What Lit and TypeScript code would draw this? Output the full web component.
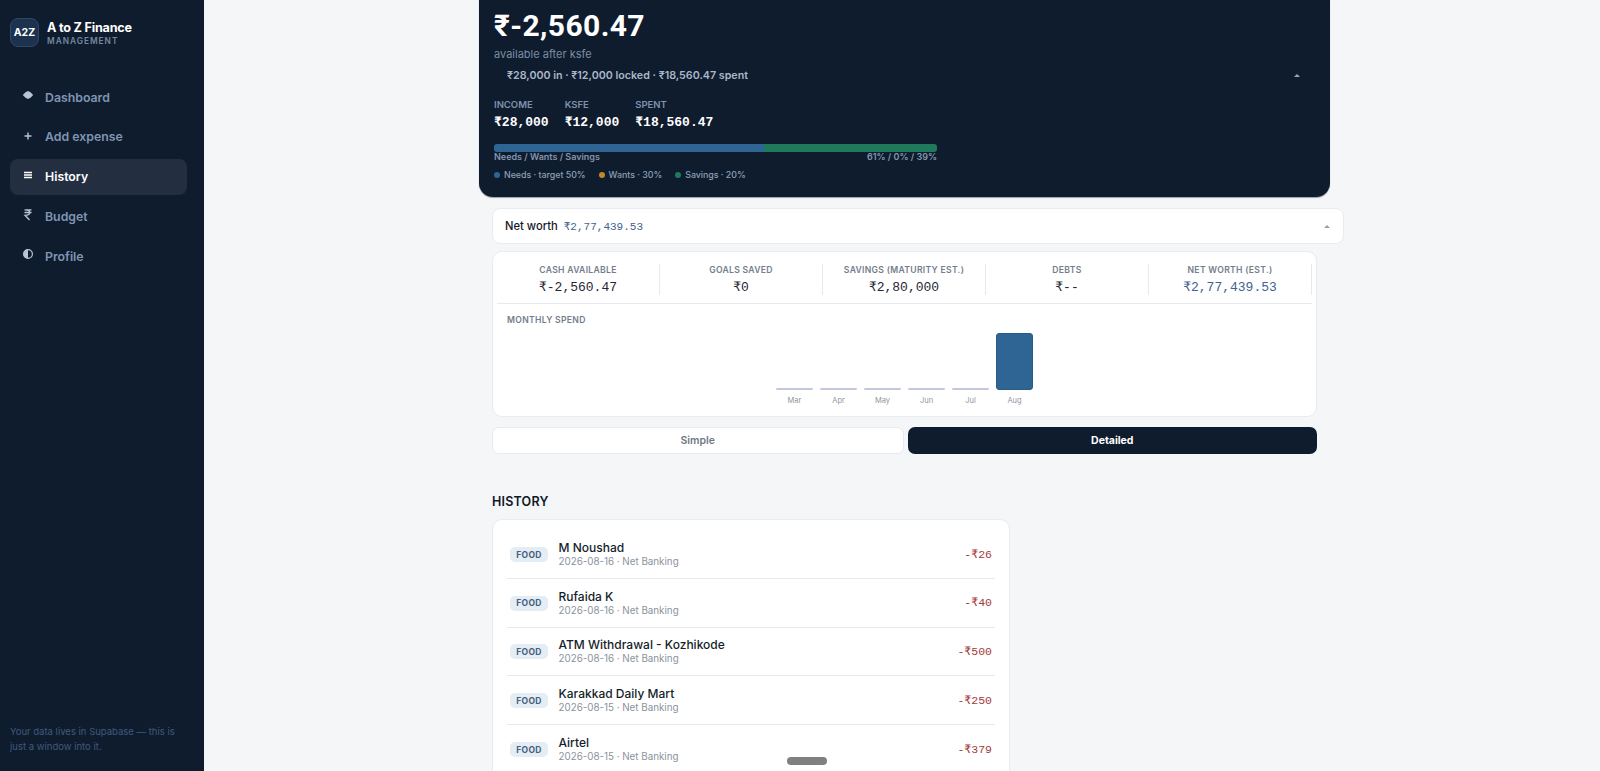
import { LitElement, html, css, svg } from "lit";
import { customElement } from "lit/decorators.js";

const NAV = [
  { label: "Dashboard", icon: svg`<path d="M6 1 8.500 2.200 11.200 5 8.500 7.800 6 9 3.500 7.800 .8 5 3.500 2.200Z" fill="currentColor"/>` , cls: "" },
  { label: "Add expense", icon: svg`<path d="M6 2.500v7M2.500 6h7" stroke="currentColor" stroke-width="1.400" fill="none"/>`, cls: "" },
  { label: "History", icon: svg`<path d="M2 2.500h8M2 5h8M2 7.500h8" stroke="currentColor" stroke-width="1.600" fill="none"/>`, cls: "active" },
  { label: "Budget", icon: svg`<path d="M2.500 .8h7M2.500 3.500h7M3 .8c3.800 0 4.800 1.200 4.800 2.700S6.300 6.300 3 6.300L7.500 11" stroke="currentColor" stroke-width="1.300" fill="none"/>`, cls: "" },
  { label: "Profile", icon: svg`<circle cx="6" cy="5" r="4.400" stroke="currentColor" fill="none" stroke-width="1.200"/><path d="M6 .6a4.400 4.400 0 0 0 0 8.800Z" fill="currentColor"/>`, cls: "" },
];

const STATS = [
  ["CASH AVAILABLE", "₹-2,560.47", ""],
  ["GOALS SAVED", "₹0", ""],
  ["SAVINGS (MATURITY EST.)", "₹2,80,000", ""],
  ["DEBTS", "₹--", ""],
  ["NET WORTH (EST.)", "₹2,77,439.53", "blue"],
];

const MONTHS = [
  ["Mar", 2], ["Apr", 2], ["May", 2], ["Jun", 2], ["Jul", 2], ["Aug", 57],
] as const;

const ROWS = [
  ["M Noushad", "2026-08-16 · Net Banking", "-₹26"],
  ["Rufaida K", "2026-08-16 · Net Banking", "-₹40"],
  ["ATM Withdrawal - Kozhikode", "2026-08-16 · Net Banking", "-₹500"],
  ["Karakkad Daily Mart", "2026-08-15 · Net Banking", "-₹250"],
  ["Airtel", "2026-08-15 · Net Banking", "-₹379"],
];

@customElement("app-root")
export class AppRoot extends LitElement {
  static styles = css`
    :host {
      display: block;
      position: relative;
      height: 771px;
      overflow: hidden;
      background: #f4f6f8;
      font-family: Inter, "Noto Sans", sans-serif;
      color: #111827;
    }
    .shell { display: flex; height: 771px; }
    .side {
      width: 204px;
      flex: none;
      box-sizing: border-box;
      background: #0f1c2e;
      padding: 18px 10px 17px;
      display: flex;
      flex-direction: column;
    }
    .brand { display: flex; align-items: center; gap: 8px; height: 29px; }
    .logo {
      width: 29px; height: 29px; box-sizing: border-box;
      border-radius: 8px; border: 1px solid #2f4866;
      background: #1c324e;
      display: flex; align-items: center; justify-content: center;
      color: #fff; font-size: 10.500px; font-weight: 700;
    }
    .brand-t { display: flex; flex-direction: column; margin-top: 0; }
    .brand-name { color: #fff; font-size: 12.600px; font-weight: 700; line-height: 17px; letter-spacing: -0.2px; }
    .brand-sub { color: #75889f; font-size: 8.300px; font-weight: 600; letter-spacing: 1px; line-height: 11px; }
    nav { display: flex; flex-direction: column; margin-top: 32px; gap: 3.800px; }
    .item {
      height: 36px; border-radius: 8px;
      display: flex; align-items: center; gap: 11px;
      padding: 0 12px;
      color: #7f95b2; font-size: 12.300px; font-weight: 600;
      width: 177px; box-sizing: border-box;
    }
    .item svg { width: 12px; height: 12px; flex: none; margin-top: -2px; color: #b7c5d6; }
    .item.active { background: #232f40; color: #fff; }
    .item.active svg { color: #fff; }
    .foot { margin-top: auto; color: #3f5a7c; font-size: 9.500px; line-height: 14.500px; width: 170px; }

    main { flex: 1; min-width: 0; padding-left: 288px; }
    .col { width: 825px; display: flex; flex-direction: column; }

    .hero {
      width: 851px; margin-left: -13px; box-sizing: border-box;
      height: 197px; padding: 9px 15px 0;
      background: #0f1c2e; border-radius: 0 0 14px 14px;
      color: #fff;
      box-shadow: 0 1px 1px rgba(0,0,0,.35);
    }
    .big { font-family: Roboto, Inter, sans-serif; font-size: 30px; font-weight: 700; line-height: 34px; letter-spacing: 0.4px; }
    .after { color: #7b8da5; font-size: 11px; line-height: 14px; margin-top: 4px; }
    .sum {
      display: flex; justify-content: space-between; align-items: center;
      padding: 0 15px 0 13px; margin-top: 6px; height: 16px;
      color: #aab7c8; font-size: 10.700px; font-weight: 600;
    }
    .caret { width: 0; height: 0; border: 3px solid transparent; border-top: 0; border-bottom: 3.500px solid #9aa6b5; }
    .kpis { display: flex; gap: 16px; margin-top: 15px; }
    .kpi-l { color: #7f92ac; font-size: 9.500px; font-weight: 600; line-height: 13px; }
    .kpi-v { font-family: "Liberation Mono", monospace; font-size: 13px; font-weight: 700; line-height: 16px; margin-top: 4px; }
    .track { display: flex; width: 443px; height: 8px; border-radius: 3px; overflow: hidden; margin-top: 13px; }
    .track i { display: block; height: 100%; }
    .sp { display: flex; justify-content: space-between; width: 443px; color: #8296ae; font-size: 9px; font-weight: 600; line-height: 11px; margin-top: -1px; }
    .legend { display: flex; gap: 13px; margin-top: 7px; color: #8ea0b6; font-size: 8.800px; font-weight: 500; line-height: 12px; }
    .legend span { display: flex; align-items: center; gap: 4px; }
    .dot { width: 6px; height: 6px; border-radius: 50%; }

    .nw {
      width: 852px; box-sizing: border-box; height: 36px; margin-top: 11px;
      background: #fff; border: 1px solid #e8ebef; border-radius: 8px;
      display: flex; align-items: center; gap: 6px; padding: 0 13px 0 12px;
      font-size: 11.200px; font-weight: 500;
    }
    .nw b { font-family: "Liberation Mono", monospace; font-size: 11px; font-weight: 400; color: #3f6390; flex: 1; }
    .nw .caret { border-bottom-color: #98a0ac; }

    .card { background: #fff; border: 1px solid #e8ebef; border-radius: 10px; box-sizing: border-box; }
    .stats-card { margin-top: 7px; height: 166px; padding: 0 4px; }
    .stats { display: grid; grid-template-columns: repeat(5, 163px); height: 52px; border-bottom: 1px solid #e6e9ee; padding-top: 12px; box-sizing: border-box; }
    .stat { height: 31px; border-right: 1px solid #e6e9ee; text-align: center; display: flex; flex-direction: column; align-items: center; }
    .stat-l { color: #737d8c; font-size: 8.600px; font-weight: 600; letter-spacing: .3px; line-height: 12px; }
    .stat-v { font-family: "Liberation Mono", monospace; font-size: 13px; line-height: 16px; margin-top: 4px; color: #1f2733; }
    .stat-v.blue { color: #3f6390; }
    .ms { color: #737d8c; font-size: 8.600px; font-weight: 600; letter-spacing: .3px; line-height: 12px; margin: 10px 0 0 10px; }
    .bars { display: flex; justify-content: center; gap: 7px; height: 78px; margin-top: 2px; margin-left: 0; }
    .bar-c { width: 37px; display: flex; flex-direction: column; justify-content: flex-end; align-items: center; }
    .bar { width: 100%; box-sizing: border-box; background: #c4c8dc; border-radius: 1px; }
    .bar.big-b { background: #2f6594; border: 1px solid #2a5c8a; border-radius: 3px; }
    .bar-l { color: #8f96a1; font-size: 7.500px; line-height: 10px; margin-top: 6px; height: 10px; }

    .seg { display: flex; gap: 4px; margin-top: 9.500px; }
    .seg div {
      flex: 1; height: 27px; border-radius: 7px; box-sizing: border-box;
      display: flex; align-items: center; justify-content: center;
      font-size: 10.500px; font-weight: 700;
    }
    .seg .off { background: #fff; border: 1px solid #e8ebef; color: #6f7986; font-weight: 600; }
    .seg .on { background: #0f1c2e; color: #fff; }

    h2 { margin: 40px 0 0; font-size: 12.500px; font-weight: 600; line-height: 16px; letter-spacing: .2px; color: #111827; }
    .hist { width: 518px; margin-top: 9px; padding: 11px 14px 0; height: 300px; }
    .row { display: flex; align-items: center; gap: 10.500px; height: 48.600px; box-sizing: border-box; border-bottom: 1px solid #e6e9ee; padding: 1px 3px 0 3px; }
    .row:last-child { border-bottom: 0; }
    .tag {
      width: 38px; height: 15px; border-radius: 5px; background: #e4edf3;
      color: #44617f; font-size: 8.500px; font-weight: 700; letter-spacing: .3px;
      display: flex; align-items: center; justify-content: center; flex: none;
    }
    .tx { flex: 1; min-width: 0; }
    .tx-n { font-size: 12px; font-weight: 500; line-height: 14px; color: #151d2b; }
    .tx-d { font-size: 9.800px; line-height: 13px; color: #8b929d; }
    .amt { font-family: "Liberation Mono", monospace; font-size: 11.500px; color: #a33a3a; margin-top: -2px; }
    .pill { position: absolute; left: 787px; top: 757px; width: 40px; height: 8px; border-radius: 4px; background: #808080; }
  `;

  render() {
    return html`
      <div class="shell">
        <aside class="side">
          <div class="brand">
            <div class="logo">A2Z</div>
            <div class="brand-t">
              <div class="brand-name">A to Z Finance</div>
              <div class="brand-sub">MANAGEMENT</div>
            </div>
          </div>
          <nav>
            ${NAV.map(n => html`
              <div class="item ${n.cls}">
                <svg viewBox="0 0 12 12">${n.icon}</svg>
                <span>${n.label}</span>
              </div>`)}
          </nav>
          <div class="foot">Your data lives in Supabase — this is just a window into it.</div>
        </aside>
        <main>
          <div class="col">
            <section class="hero">
              <div class="big">₹-2,560.47</div>
              <div class="after">available after ksfe</div>
              <div class="sum">
                <span>₹28,000 in · ₹12,000 locked · ₹18,560.47 spent</span>
                <i class="caret"></i>
              </div>
              <div class="kpis">
                <div><div class="kpi-l">INCOME</div><div class="kpi-v">₹28,000</div></div>
                <div><div class="kpi-l">KSFE</div><div class="kpi-v">₹12,000</div></div>
                <div><div class="kpi-l">SPENT</div><div class="kpi-v">₹18,560.47</div></div>
              </div>
              <div class="track">
                <i style="width:61%;background:#2f6594"></i>
                <i style="width:39%;background:#1f7a5c"></i>
              </div>
              <div class="sp"><span>Needs / Wants / Savings</span><span>61% / 0% / 39%</span></div>
              <div class="legend">
                <span><i class="dot" style="background:#2f6594"></i>Needs · target 50%</span>
                <span><i class="dot" style="background:#c08a25"></i>Wants · 30%</span>
                <span><i class="dot" style="background:#1f7a5c"></i>Savings · 20%</span>
              </div>
            </section>

            <div class="nw"><span>Net worth</span><b>₹2,77,439.53</b><i class="caret"></i></div>

            <section class="card stats-card">
              <div class="stats">
                ${STATS.map(s => html`
                  <div class="stat">
                    <div class="stat-l">${s[0]}</div>
                    <div class="stat-v ${s[2]}">${s[1]}</div>
                  </div>`)}
              </div>
              <div class="ms">MONTHLY SPEND</div>
              <div class="bars">
                ${MONTHS.map(m => html`
                  <div class="bar-c">
                    <div class="bar ${m[1] > 2 ? "big-b" : ""}" style="height:${m[1]}px"></div>
                    <div class="bar-l">${m[0]}</div>
                  </div>`)}
              </div>
            </section>

            <div class="seg"><div class="off">Simple</div><div class="on">Detailed</div></div>

            <h2>HISTORY</h2>
            <section class="card hist">
              ${ROWS.map(r => html`
                <div class="row">
                  <div class="tag">FOOD</div>
                  <div class="tx">
                    <div class="tx-n">${r[0]}</div>
                    <div class="tx-d">${r[1]}</div>
                  </div>
                  <div class="amt">${r[2]}</div>
                </div>`)}
            </section>
          </div>
        </main>
      </div>
      <div class="pill"></div>
    `;
  }
}
